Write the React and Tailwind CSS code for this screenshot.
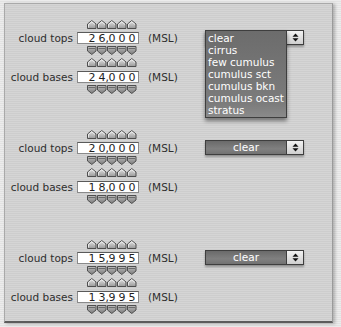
import React from "react";

const font = { fontFamily: '"DejaVu Sans", Verdana, sans-serif' };

function UpArrow() {
  return (
    <svg width="10" height="9" viewBox="0 0 10 9" className="block">
      <defs>
        <linearGradient id="ug" x1="0" y1="0" x2="0" y2="1">
          <stop offset="0" stopColor="#e4e4e4" />
          <stop offset="1" stopColor="#9a9a9a" />
        </linearGradient>
      </defs>
      <polygon points="0.5,8.5 0.5,4 4.75,0.5 9,4 9,8.5" fill="url(#ug)" stroke="#4e4e4e" strokeWidth="1" />
      <polyline points="1.5,7.5 1.5,4.5 4.75,1.8 8,4.5" fill="none" stroke="#f4f4f4" strokeWidth="0.8" />
    </svg>
  );
}

function DownArrow() {
  return (
    <svg width="10" height="9" viewBox="0 0 10 9" className="block">
      <defs>
        <linearGradient id="dg" x1="0" y1="0" x2="0" y2="1">
          <stop offset="0" stopColor="#bdbdbd" />
          <stop offset="1" stopColor="#7a7a7a" />
        </linearGradient>
      </defs>
      <polygon points="0.5,0.5 9,0.5 9,5 4.75,8.5 0.5,5" fill="url(#dg)" stroke="#4e4e4e" strokeWidth="1" />
      <line x1="1.5" y1="2.5" x2="8" y2="2.5" stroke="#5a5a5a" strokeWidth="0.8" />
    </svg>
  );
}

function ArrowRow({ down }) {
  return (
    <div className="flex h-[9px] ml-[10px]">
      {[0, 1, 2, 3, 4].map((i) => (
        <div key={i} className="w-[10px] h-[9px]">
          {down ? <DownArrow /> : <UpArrow />}
        </div>
      ))}
    </div>
  );
}

function Spinner({ label, digits, first }) {
  return (
    <div className={first ? "flex flex-col" : "flex flex-col mt-[3px]"}>
      <div className="flex">
        <div className="w-[72px]" />
        <ArrowRow />
      </div>
      <div className={first ? "flex items-center mt-[3px]" : "flex items-center mt-[4px]"}>
        <div className="w-[68px] text-right text-[10.5px] text-[#2e2e2e] leading-none" style={font}>
          {label}
        </div>
        <div className="ml-[4px] w-[62px] h-[12px] bg-white border border-[#8a8a8a] border-t-[#5a5a5a] flex items-center pl-[9px]">
          {digits.map((d, i) => (
            <span
              key={i}
              className="relative w-[10px] text-center text-[11px] leading-none text-[#1e1e1e]"
              style={font}
            >
              {d}
              {i === 1 && (
                <span className="absolute right-[-2px] top-0">,</span>
              )}
            </span>
          ))}
        </div>
        <div className="ml-[9px] text-[10.5px] text-[#2e2e2e] leading-none" style={font}>
          (MSL)
        </div>
      </div>
      <div className="flex mt-[2px]">
        <div className="w-[72px]" />
        <ArrowRow down />
      </div>
    </div>
  );
}

function UpDownIcon() {
  return (
    <svg width="7" height="9" viewBox="0 0 7 9" className="block">
      <polygon points="3.5,0.5 6.5,3.8 0.5,3.8" fill="#111" />
      <polygon points="0.5,5.2 6.5,5.2 3.5,8.5" fill="#111" />
    </svg>
  );
}

const items = ["clear", "cirrus", "few cumulus", "cumulus sct", "cumulus bkn", "cumulus ocast", "stratus"];

function Dropdown({ open }) {
  return (
    <div className="relative flex h-[15px] mt-[10px] ml-[24px] shadow-[0_2px_2px_rgba(0,0,0,0.3)]">
      <div className="w-[82px] h-[15px] border border-[#3e3e3e] bg-[linear-gradient(to_bottom,#6a6a6a,#808080_60%,#727272)] flex items-center justify-center text-white text-[10.5px] leading-none" style={font}>
        clear
      </div>
      <div className="w-[17px] h-[15px] border border-[#3e3e3e] border-l-0 bg-[linear-gradient(to_bottom,#f2f2f2,#cfcfcf)] flex items-center justify-center">
        <UpDownIcon />
      </div>
      {open && (
        <div
          className="absolute left-0 top-0 w-[82px] h-[88px] border border-[#3e3e3e] bg-[linear-gradient(to_bottom,#6c6c6c,#7c7c7c_85%,#8a8a8a)] shadow-[0_3px_4px_rgba(0,0,0,0.45)] flex flex-col pl-[2px] pt-[1px]"
          style={font}
        >
          {items.map((t) => (
            <div key={t} className="h-[12px] text-white text-[10.5px] leading-[12px] whitespace-nowrap">
              {t}
            </div>
          ))}
        </div>
      )}
    </div>
  );
}

function Group({ tops, bases, open, first }) {
  return (
    <div className={first ? "flex items-start" : "flex items-start mt-[36px]"}>
      <div className="flex flex-col w-[176px]">
        <Spinner label="cloud tops" digits={tops} first />
        <Spinner label="cloud bases" digits={bases} />
      </div>
      <Dropdown open={open} />
    </div>
  );
}

export default function App() {
  return (
    <div className="w-[341px] h-[327px] overflow-hidden bg-[repeating-linear-gradient(to_bottom,#ececec_0px,#ececec_1px,#e2e2e2_1px,#e2e2e2_2px)] pt-[3px] pl-[4px]">
      <div className="w-[329px] h-[320px] border-l border-t border-[#a9a9a9] border-b-2 border-b-[#5c5c5c] border-r border-r-[#9a9a9a] shadow-[2px_1px_3px_rgba(0,0,0,0.25)] bg-[repeating-linear-gradient(to_bottom,#d5d5d5_0px,#d5d5d5_1px,#cdcdcd_1px,#cdcdcd_2px)] pt-[16px]">
        <Group first tops={["2", "6", "0", "0", "0"]} bases={["2", "4", "0", "0", "0"]} open />
        <Group tops={["2", "0", "0", "0", "0"]} bases={["1", "8", "0", "0", "0"]} />
        <Group tops={["1", "5", "9", "9", "5"]} bases={["1", "3", "9", "9", "5"]} />
      </div>
    </div>
  );
}
